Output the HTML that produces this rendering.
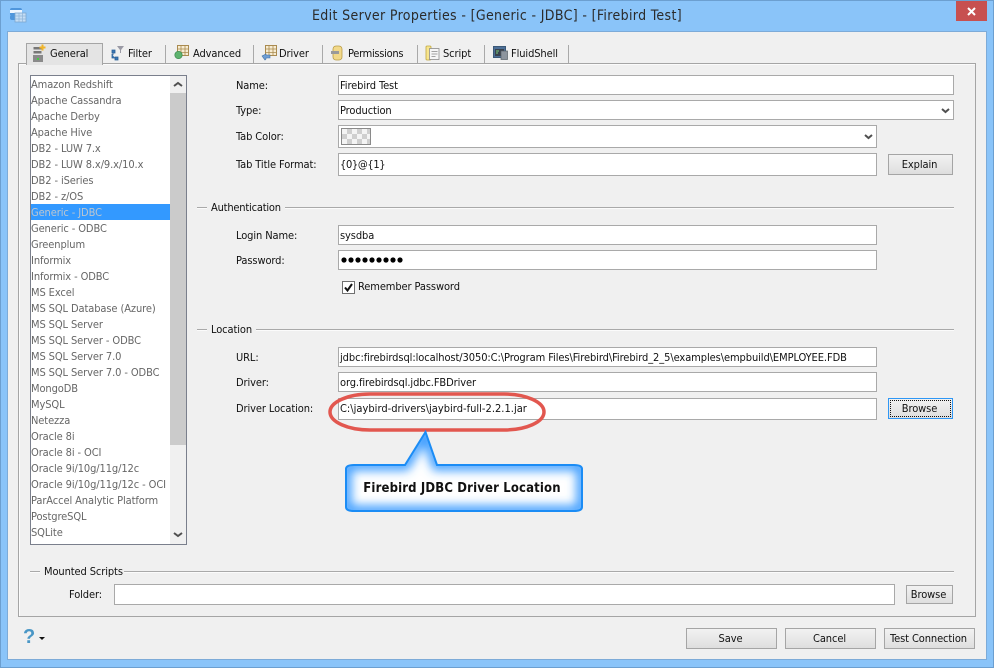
<!DOCTYPE html>
<html><head><meta charset="utf-8">
<style>
html,body{margin:0;padding:0}
body{width:994px;height:668px;overflow:hidden;position:relative;background:#8ac4f9;font:11px/14px "DejaVu Sans Condensed","DejaVu Sans","Liberation Sans",sans-serif;color:#111;letter-spacing:-.1px}
div,span{position:absolute;box-sizing:border-box;white-space:nowrap}
.t{height:14px;line-height:14px;margin-top:1px}
.f{background:#fff;border:1px solid #a9a9a9;padding-left:1px;line-height:20px;color:#111}
.b{background:linear-gradient(#f2f2f2,#dedede);border:1px solid #a5a5a5;text-align:center;line-height:19px;color:#111;padding-right:2px}
.l{left:0;width:139px;height:16px;line-height:17px;color:#666;padding-left:0;margin-top:-1px}
.hr{height:1px;background:#a9a9a9;box-shadow:0 1px 0 #fbfbfb}
.sep{width:1px;height:18px;top:45px;background:#a9a9a9}
svg{position:absolute;overflow:visible}
</style></head><body>
<div style="left:0;top:0;width:994px;height:668px;border:1px solid #6c9fd0"></div>
<svg style="left:9px;top:6px" width="18" height="18" viewBox="0 0 18 18"><rect x="1" y="2" width="12" height="8" rx="2" fill="#4f96dc"/><rect x="1" y="4" width="12" height="3" fill="#eef6ff"/><rect x="1" y="9" width="9" height="5" rx="2" fill="#4f96dc"/><rect x="6" y="7" width="11" height="9" fill="#c5def5" stroke="#7ba6cf" stroke-width=".8"/><path d="M6 10h11M6 13h11M10 7v9M13.500 7v9" stroke="#8fb4d8" stroke-width=".7"/></svg>
<div class="t" style="left:0;width:994px;top:5px;height:20px;line-height:20px;text-align:center;font-size:14px;color:#2b2b2b;letter-spacing:.35px">Edit Server Properties - [Generic - JDBC] - [Firebird Test]</div>
<div style="left:956px;top:1px;width:31px;height:20px;background:#c75050"></div>
<svg style="left:956px;top:1px" width="31" height="20"><path d="M12 7l7 7M19 7l-7 7" stroke="#fff" stroke-width="2"/></svg>

<div style="left:7px;top:31px;width:980px;height:629px;background:#f0f0f0;border:1px solid #7dabd8"></div>
<div style="left:18px;top:63px;width:958px;height:554px;border:1px solid #a5a5a5;box-shadow:inset 1px 1px 0 #fbfbfb"></div>
<div style="left:26px;top:43px;width:77px;height:22px;background:#e4e4e4;border:1px solid #a5a5a5;border-bottom:0"></div>
<svg style="left:32px;top:44px" width="14" height="19"><rect x="1.500" y="3" width="8" height="2.500" fill="#777"/><rect x="1.500" y="7" width="8" height="2.500" fill="#777"/><rect x="1" y="11" width="10" height="7" fill="#8a8a8a"/><rect x="5" y="14" width="2" height="2" fill="#4c4"/><path d="M10.500 .5v6M7.500 3.500h6" stroke="#f0b429" stroke-width="2"/></svg>
<div class="t" style="left:50px;top:46px">General</div>
<svg style="left:110px;top:45px" width="16" height="16"><path d="M7 1h7l-3 4v3h-1V5z" fill="#9a9aa5"/><path d="M2 5h3v3H2zM5 12h3v3H5zM2 9v4h3M3 8v2" fill="#3a78b5" stroke="#2a5f96" stroke-width=".8"/></svg>
<div class="t" style="left:128px;top:46px">Filter</div><div class="sep" style="left:165px"></div>
<svg style="left:174px;top:45px" width="15" height="15"><rect x="3.500" y=".5" width="11" height="10" fill="#f7ecd2" stroke="#a98a4f"/><path d="M3.500 4h11M3.500 7.500h11M7 .5v10M11 .5v10" stroke="#a98a4f" stroke-width=".8"/><circle cx="4.500" cy="10" r="3.700" fill="#5fb36f" stroke="#3d8a4f" stroke-width=".7"/></svg>
<div class="t" style="left:193px;top:46px">Advanced</div><div class="sep" style="left:253px"></div>
<svg style="left:261px;top:45px" width="16" height="16"><rect x="4.500" y=".5" width="11" height="10" fill="#f7ecd2" stroke="#a98a4f"/><path d="M4.500 4h11M4.500 7.500h11M8 .5v10M12 .5v10" stroke="#a98a4f" stroke-width=".8"/><path d="M1 11l4-2v1h4v3H5v1l-1 1z" fill="#6f9fd5" stroke="#3f6fa5" stroke-width=".6"/></svg>
<div class="t" style="left:279px;top:46px">Driver</div><div class="sep" style="left:322px"></div>
<svg style="left:331px;top:45px" width="13" height="16"><rect x="2" y="1" width="9" height="14" rx="3" fill="#f2d98a" stroke="#b89a45" stroke-width=".8"/><rect x="0" y="6" width="8" height="3" fill="#9a9a9a"/></svg>
<div class="t" style="left:348px;top:46px;letter-spacing:-.3px">Permissions</div><div class="sep" style="left:417px"></div>
<svg style="left:425px;top:45px" width="15" height="16"><rect x="1" y="1" width="5" height="14" rx="1" fill="#f7e58e" stroke="#c0a63f" stroke-width=".8"/><rect x="4.500" y="3.500" width="9.500" height="11" fill="#f6f6f6" stroke="#8c8c8c" stroke-width=".8"/><path d="M6.500 6.500h6M6.500 9h6M6.500 11.500h4" stroke="#888" stroke-width=".8"/></svg>
<div class="t" style="left:443px;top:46px">Script</div><div class="sep" style="left:484px"></div>
<svg style="left:493px;top:46px" width="15" height="14"><rect x=".5" y=".5" width="12" height="11" fill="#4c6f97" stroke="#3b5877"/><rect x="2" y="3" width="9" height="7" fill="#39424d"/><path d="M3 5h3M3 7h2" stroke="#7fd07f"/><rect x="8" y="5" width="6.500" height="8.500" fill="#8d959e" stroke="#596169" stroke-width=".7"/></svg>
<div class="t" style="left:511px;top:46px">FluidShell</div><div class="sep" style="left:568px"></div>

<!-- list -->
<div style="left:30px;top:75px;width:157px;height:470px;background:#fff;border:1px solid #7a7f8c;overflow:hidden">
<div class="l" style="top:1px">Amazon Redshift</div>
<div class="l" style="top:17px">Apache Cassandra</div>
<div class="l" style="top:33px">Apache Derby</div>
<div class="l" style="top:49px">Apache Hive</div>
<div class="l" style="top:65px">DB2 - LUW 7.x</div>
<div class="l" style="top:81px">DB2 - LUW 8.x/9.x/10.x</div>
<div class="l" style="top:97px">DB2 - iSeries</div>
<div class="l" style="top:113px">DB2 - z/OS</div>
<div class="l" style="top:129px;background:#3399ff;color:#bcc6d0">Generic - JDBC</div>
<div class="l" style="top:145px">Generic - ODBC</div>
<div class="l" style="top:161px">Greenplum</div>
<div class="l" style="top:177px">Informix</div>
<div class="l" style="top:193px">Informix - ODBC</div>
<div class="l" style="top:209px">MS Excel</div>
<div class="l" style="top:225px">MS SQL Database (Azure)</div>
<div class="l" style="top:241px">MS SQL Server</div>
<div class="l" style="top:257px">MS SQL Server - ODBC</div>
<div class="l" style="top:273px">MS SQL Server 7.0</div>
<div class="l" style="top:289px">MS SQL Server 7.0 - ODBC</div>
<div class="l" style="top:305px">MongoDB</div>
<div class="l" style="top:321px">MySQL</div>
<div class="l" style="top:337px">Netezza</div>
<div class="l" style="top:353px">Oracle 8i</div>
<div class="l" style="top:369px">Oracle 8i - OCI</div>
<div class="l" style="top:385px">Oracle 9i/10g/11g/12c</div>
<div class="l" style="top:401px">Oracle 9i/10g/11g/12c - OCI</div>
<div class="l" style="top:417px">ParAccel Analytic Platform</div>
<div class="l" style="top:433px">PostgreSQL</div>
<div class="l" style="top:449px">SQLite</div>
<div style="left:139px;top:0;width:16px;height:468px;background:#f0f0f0"></div>
<div style="left:139px;top:17px;width:16px;height:352px;background:#cbcbcb"></div>
<svg style="left:142px;top:5px" width="10" height="8"><path d="M1 5l4-3 4 3" fill="none" stroke="#505050" stroke-width="2"/></svg>
<svg style="left:142px;top:455px" width="10" height="8"><path d="M1 2l4 3 4-3" fill="none" stroke="#505050" stroke-width="2"/></svg>
</div>

<!-- form -->
<div class="t" style="left:236px;top:78px">Name:</div>
<div class="f" style="left:338px;top:75px;width:616px;height:20px">Firebird Test</div>
<div class="t" style="left:236px;top:103px">Type:</div>
<div class="f" style="left:338px;top:100px;width:616px;height:20px">Production</div>
<svg style="left:941px;top:107px" width="9" height="8"><path d="M1 2l3.500 3L8 2" fill="none" stroke="#505050" stroke-width="2"/></svg>
<div class="t" style="left:236px;top:129px">Tab Color:</div>
<div class="f" style="left:338px;top:125px;width:539px;height:23px"></div>
<div style="left:341px;top:128px;width:30px;height:17px;border:1px solid #8a8a8a;background:repeating-conic-gradient(#cfcfcf 0 25%,#f4f4f4 0 50%) 0 0/10px 10px"></div>
<svg style="left:864px;top:133px" width="9" height="8"><path d="M1 2l3.500 3L8 2" fill="none" stroke="#505050" stroke-width="2"/></svg>
<div class="t" style="left:236px;top:157px">Tab Title Format:</div>
<div class="f" style="left:338px;top:153px;width:539px;height:23px;line-height:22px;letter-spacing:-.35px">{0}@{1}</div>
<div class="b" style="left:888px;top:154px;width:65px;height:21px">Explain</div>

<div class="hr" style="left:197px;top:207px;width:10px"></div>
<div class="t" style="left:211px;top:200px;letter-spacing:-.2px">Authentication</div>
<div class="hr" style="left:285px;top:207px;width:669px"></div>
<div class="t" style="left:236px;top:228px">Login Name:</div>
<div class="f" style="left:338px;top:225px;width:539px;height:20px">sysdba</div>
<div class="t" style="left:236px;top:253px">Password:</div>
<div class="f" style="left:338px;top:250px;width:539px;height:20px"></div>
<svg style="left:341px;top:256px" width="64" height="8"><g fill="#000"><circle cx="3" cy="4" r="2.600"/><circle cx="10" cy="4" r="2.600"/><circle cx="17" cy="4" r="2.600"/><circle cx="24" cy="4" r="2.600"/><circle cx="31" cy="4" r="2.600"/><circle cx="38" cy="4" r="2.600"/><circle cx="45" cy="4" r="2.600"/><circle cx="52" cy="4" r="2.600"/><circle cx="59" cy="4" r="2.600"/></g></svg>
<div style="left:342px;top:281px;width:13px;height:13px;background:#fff;border:1px solid #707070"></div>
<svg style="left:342px;top:281px" width="13" height="13"><path d="M3 6.500l2.500 3L10 3" fill="none" stroke="#111" stroke-width="2"/></svg>
<div class="t" style="left:358px;top:279px">Remember Password</div>

<div class="hr" style="left:197px;top:329px;width:10px"></div>
<div class="t" style="left:211px;top:322px">Location</div>
<div class="hr" style="left:256px;top:329px;width:698px"></div>
<div class="t" style="left:236px;top:350px">URL:</div>
<div class="f" style="left:338px;top:347px;width:539px;height:20px;letter-spacing:-.08px">jdbc:firebirdsql:localhost/3050:C:\Program Files\Firebird\Firebird_2_5\examples\empbuild\EMPLOYEE.FDB</div>
<div class="t" style="left:236px;top:375px">Driver:</div>
<div class="f" style="left:338px;top:372px;width:539px;height:20px">org.firebirdsql.jdbc.FBDriver</div>
<div class="t" style="left:236px;top:401px">Driver Location:</div>
<div class="f" style="left:338px;top:398px;width:539px;height:22px;line-height:19px;letter-spacing:.02px">C:\jaybird-drivers\jaybird-full-2.2.1.jar</div>
<div class="b" style="left:888px;top:398px;width:65px;height:21px;border:1px solid #2f97f5;line-height:19px">Browse</div>
<div style="left:890px;top:400px;width:61px;height:17px;border:1px dotted #111"></div>

<svg style="left:320px;top:390px" width="280" height="130">
<defs>
<clipPath id="c"><path d="M34 75Q26 75 26 79V117Q26 121 34 121H254Q262 121 262 117V79Q262 75 254 75H117L105.500 42L85 75Z"/></clipPath>
<filter id="bl" x="-20%" y="-40%" width="140%" height="180%"><feGaussianBlur stdDeviation="5"/></filter>
</defs>
<rect x="10" y="4" width="214" height="36" rx="40" ry="18" fill="none" stroke="#e2574f" stroke-width="3.500"/>
<path d="M34 75Q26 75 26 79V117Q26 121 34 121H254Q262 121 262 117V79Q262 75 254 75H117L105.500 42L85 75Z" fill="#fff"/>
<g clip-path="url(#c)"><path d="M34 75Q26 75 26 79V117Q26 121 34 121H254Q262 121 262 117V79Q262 75 254 75H117L105.500 42L85 75Z" fill="none" stroke="#3d9dff" stroke-width="11" filter="url(#bl)"/></g>
<path d="M34 75Q26 75 26 79V117Q26 121 34 121H254Q262 121 262 117V79Q262 75 254 75H117L105.500 42L85 75Z" fill="none" stroke="#1b8cf5" stroke-width="2"/>
</svg>
<div class="t" style="left:322px;width:280px;top:481px;text-align:center;font:bold 13px/14px 'DejaVu Sans Condensed','DejaVu Sans','Liberation Sans',sans-serif;color:#111;letter-spacing:.15px">Firebird JDBC Driver Location</div>

<div class="hr" style="left:30px;top:571px;width:10px"></div>
<div class="t" style="left:44px;top:564px">Mounted Scripts</div>
<div class="hr" style="left:124px;top:571px;width:830px"></div>
<div class="t" style="left:69px;top:587px">Folder:</div>
<div class="f" style="left:114px;top:584px;width:781px;height:21px"></div>
<div class="b" style="left:906px;top:585px;width:47px;height:19px;line-height:17px">Browse</div>

<div style="left:23px;top:626px;font:bold 20px/22px 'Liberation Sans',sans-serif;color:#4a97c6">?</div>
<svg style="left:39px;top:637px" width="7" height="4"><path d="M0 0h6L3 3z" fill="#111"/></svg>
<div class="b" style="left:686px;top:628px;width:91px;height:21px">Save</div>
<div class="b" style="left:785px;top:628px;width:91px;height:21px">Cancel</div>
<div class="b" style="left:884px;top:628px;width:91px;height:21px;letter-spacing:-.1px">Test Connection</div>
</body></html>
